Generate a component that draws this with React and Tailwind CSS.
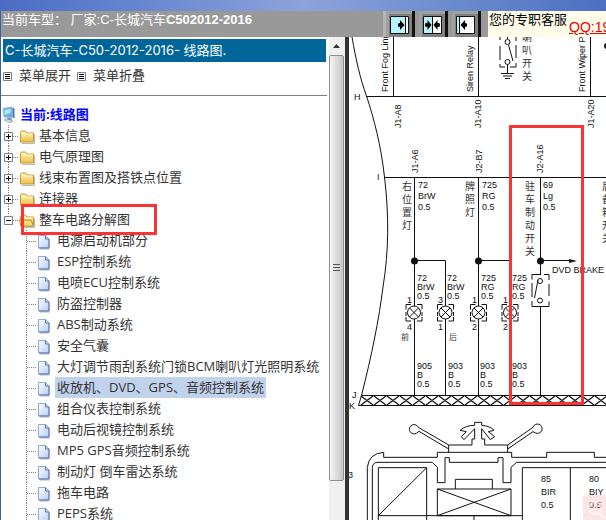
import React from "react";

const FOLDERS = ["基本信息", "电气原理图", "线束布置图及搭铁点位置", "连接器"];

const PAGES = [
  "电源启动机部分",
  "ESP控制系统",
  "电喷ECU控制系统",
  "防盗控制器",
  "ABS制动系统",
  "安全气囊",
  "大灯调节雨刮系统门锁BCM喇叭灯光照明系统",
  "收放机、DVD、GPS、音频控制系统",
  "组合仪表控制系统",
  "电动后视镜控制系统",
  "MP5 GPS音频控制系统",
  "制动灯 倒车雷达系统",
  "拖车电路",
  "PEPS系统",
];

const SELECTED = "收放机、DVD、GPS、音频控制系统";

function FolderIcon({ open }) {
  return (
    <svg width="18" height="18" viewBox="0 0 18 18" className="shrink-0">
      <defs>
        <linearGradient id="folder" x1="0" y1="0" x2="0" y2="1">
          <stop offset="0" stopColor="#fff6b8" />
          <stop offset="1" stopColor="#ecc04a" />
        </linearGradient>
      </defs>
      <path d="M3 16.500h12.500v-9" fill="none" stroke="#b9b9b9" />
      <path d="M1.500 15v-9.500l1-1.500h4l1.500 2h6.500v9z" fill="url(#folder)" stroke="#c39a2c" />
      {open && <path d="M2 15l-1.500-6h11.500l2.500 6z" fill="#f9dc72" stroke="#b88d22" />}
      <path d="M2.500 7h11" stroke="#fffbe0" />
    </svg>
  );
}

function PageIcon() {
  return (
    <svg width="18" height="18" viewBox="0 0 18 18" className="shrink-0">
      <defs>
        <linearGradient id="page" x1="0" y1="0" x2="1" y2="1">
          <stop offset="0" stopColor="#ffffff" />
          <stop offset="1" stopColor="#b4cdf4" />
        </linearGradient>
      </defs>
      <path d="M3 17h9.500" stroke="#b5b5b5" />
      <path d="M1.500 3.500h7l3.500 3.500v9h-10.500z" fill="url(#page)" stroke="#8fa9d6" />
      <path d="M8.500 3.500v3.500h3.500v9h-10" fill="none" stroke="#5c74ac" />
    </svg>
  );
}

function ComputerIcon() {
  return (
    <svg width="18" height="18" viewBox="0 0 18 18" className="shrink-0">
      <path d="M2 2.500l9-1.500v10.500l-8-0.500z" fill="#5cb4ee" stroke="#9cb8cf" />
      <path d="M3.500 4l6-1v4l-6 2z" fill="#b5e4fd" />
      <path d="M11.500 1.500l2 1v10l-2-1z" fill="#4a74b4" />
      <path d="M6 12l5 .5-1 2.500-3-1z" fill="#557dbd" />
      <path d="M3 14l3-1 6 2-3 2z" fill="#d5dae2" stroke="#8f99a8" strokeWidth=".7" />
    </svg>
  );
}

function MenuIcon() {
  return (
    <svg width="9" height="9" viewBox="0 0 9 9">
      <path d="M.5.5h8v8h-8z" fill="#fff" stroke="#808080" />
      <path d="M2 2.500h5M2 4.500h5M2 6.500h5" stroke="#000" />
    </svg>
  );
}

function Joint({ open }) {
  return (
    <svg width="18" height="21" viewBox="0 0 18 21">
      <path d={open ? "M7.500 0v6" : "M7.500 0v21"} stroke="#808080" strokeDasharray="1 1" />
      <path d="M12 11.500h5" stroke="#808080" strokeDasharray="1 1" />
      <path d="M3.500 7.500h8v8h-8z" fill="#fff" stroke="#808080" />
      <path d={open ? "M5 11.500h5" : "M5 11.500h5M7.500 9v5"} stroke="#000" />
    </svg>
  );
}

function FolderRow({ label, open }) {
  return (
    <li className="relative">
      <div className="flex h-[21px] items-center">
        <button type="button" aria-label={label} aria-expanded={!!open}>
          <Joint open={open} />
        </button>
        <FolderIcon open={open} />
        <a href="#folder" className="px-0.5 leading-[21px]">{label}</a>
      </div>
      {open && <div className="pointer-events-none absolute -top-[5px] left-5 z-10 h-[31px] w-[136px] border-3 border-[#fa3434]" />}
    </li>
  );
}

function PageRow({ label }) {
  return (
    <li className="flex h-[21px] items-center pl-[18px]">
      <svg width="18" height="21" viewBox="0 0 18 21" className="shrink-0">
        <path d="M7.500 0v21M8 11.500h10" stroke="#808080" strokeDasharray="1 1" />
      </svg>
      <PageIcon />
      <a href="#page" className={label === SELECTED ? "bg-[#c0d2ec] px-0.5 leading-[21px]" : "px-0.5 leading-[21px]"}>{label}</a>
    </li>
  );
}

function Sidebar() {
  return (
    <nav className="min-h-0 w-[328px] shrink-0 overflow-hidden whitespace-nowrap bg-white pt-0.5 font-['Open_Sans','Noto_Sans_CJK_SC',sans-serif] text-[13px] text-[#333]">
      <h1 className="ml-0.5 mr-[3px] h-[23px] bg-[#006699] pl-0.5 font-['Inter','Noto_Sans_CJK_SC',sans-serif] leading-[23px] text-white">
        C-长城汽车-C50-2012-2016- 线路图.
      </h1>
      <div className="mb-[5px] flex h-7 items-center gap-1.5 pl-0.5">
        <button type="button" className="flex items-center gap-[7px]"><MenuIcon />菜单展开</button>
        <button type="button" className="flex items-center gap-[7px]"><MenuIcon />菜单折叠</button>
      </div>
      <hr className="mr-0.5 border-[#808080]" />
      <div className="mt-2 flex h-[21px] items-center">
        <ComputerIcon />
        <a href="#root" className="px-px font-bold text-[#0000ff]">当前:线路图</a>
      </div>
      <ul>
        {FOLDERS.map(f => <FolderRow key={f} label={f} />)}
        <FolderRow label="整车电路分解图" open />
        {PAGES.map(p => <PageRow key={p} label={p} />)}
      </ul>
    </nav>
  );
}

function ScrollBar() {
  return (
    <div className="flex w-4 shrink-0 flex-col bg-[#f0f0f0] pr-px">
      <div className="flex h-[18px] shrink-0 items-center justify-center">
        <svg width="7" height="4" viewBox="0 0 7 4"><path d="M0 4l3.500-4 3.500 4z" fill="#333" /></svg>
      </div>
      <div className="flex h-[92%] flex-col items-center justify-center rounded-xs border border-[#8e8e8e] bg-linear-to-r from-[#f6f6f6] via-[#dcdcdc] to-[#c4c4c8]">
        <svg width="7" height="8" viewBox="0 0 7 8"><path d="M0 .5h7M0 3.500h7M0 6.500h7" stroke="#555" /></svg>
      </div>
      <div className="min-h-[39px] grow" />
    </div>
  );
}

function FrameButton({ label, children }) {
  return (
    <button type="button" aria-label={label} className="flex h-full w-[29px] items-center justify-center border-r-3 border-[#111] bg-[#808080] pt-px shadow-[inset_3px_3px_0_#a0a0a0]">
      <svg width="19" height="18" viewBox="0 0 19 18">
        <path d="M.5.5h18v17h-18z" fill="#fff" stroke="#111" />
        {children}
      </svg>
    </button>
  );
}

function TopBar() {
  return (
    <header className="flex h-[26px] shrink-0 overflow-hidden whitespace-nowrap bg-[#999] font-['Liberation_Sans','Noto_Sans_CJK_SC',sans-serif] text-[13px]">
      <p className="w-[382px] shrink-0 pl-px leading-[18px] text-white">
        当前车型： 厂家:C-长城汽车<b>C502012-2016</b>
      </p>
      <div className="flex w-[105px] shrink-0 gap-1 border-l-3 border-[#b4b4b4]">
        <FrameButton label="展开左栏">
          <path d="M1 1h14v16h-14z" fill="#b8f2fc" />
          <path d="M15.500 1v16" stroke="#111" />
          <path d="M8 8l1-1h1v-3l4.500 5-4.500 5v-3h-1l-1-1z" fill="#000" />
        </FrameButton>
        <FrameButton label="均分">
          <path d="M1 1h8v16h-8z" fill="#b8f2fc" />
          <path d="M9.500 1v16" stroke="#111" />
          <path d="M2 8l1-1h1.500v-3l4 5-4 5v-3h-1.500l-1-1zM17 8l-1-1h-1.500v-3l-4 5 4 5v-3h1.500l1-1z" fill="#000" />
        </FrameButton>
        <FrameButton label="收起左栏">
          <path d="M1 1h2v16h-2z" fill="#b8f2fc" />
          <path d="M3.500 1v16" stroke="#111" />
          <path d="M11 8l-1-1h-1v-3l-4.500 5 4.500 5v-3h1l1-1z" fill="#000" />
        </FrameButton>
      </div>
      <div className="flex grow gap-0.5 bg-[#fffdea] pl-px text-black">
        <span className="leading-[18px]">您的专职客服</span>
        <a href="#qq" className="pt-2 text-sm leading-4 text-[#f00000] underline">QQ:19</a>
      </div>
    </header>
  );
}

function Lamp({ x }) {
  return (
    <g fill="none">
      <path d={`M${x - 3} 304.500h-5v5M${x - 8} 312v4M${x - 8} 317v4h5M${x + 3} 304.500h5v5M${x + 8} 312v4M${x + 8} 317v4h-5`} />
      <circle cx={x} cy="312.500" r="6.500" fill="#fff" />
      <path d={`M${x - 4.5} 308l9 9M${x + 4.5} 308l-9 9`} />
    </g>
  );
}

// stacked wire labels: number, colour, section
function Wire({ x, y, lines, step = 9 }) {
  return lines.map((t, i) => <text key={i} x={x} y={y + i * step}>{t}</text>);
}

function Upright({ x, y, children }) {
  return <text transform={`translate(${x} ${y}) rotate(-90)`}>{children}</text>;
}

function Column({ x, y, text }) {
  return (
    <g fill="#333" className="font-['Liberation_Serif','Noto_Sans_CJK_SC',serif] text-[10px]">
      {[...text].map((c, i) => <text key={i} x={x} y={y + i * 13}>{c}</text>)}
    </g>
  );
}

// ground bus hatching, one cross per cell
const MESH = Array.from({ length: 20 }, (_, i) => 361 + i * 13)
  .map(x => `M${x} 396l12 9M${x + 12} 396l-12 9`)
  .join("");

function Diagram() {
  return (
    <svg viewBox="349 37 257 483" preserveAspectRatio="xMinYMin slice" className="h-full w-full bg-white font-['Liberation_Sans',sans-serif] text-[9px]">
      <g stroke="#111" fill="none">
        <path d="M352 37C356 60 360 78 366.500 96C374 119 381 145 384.500 177C389 215 389 250 383 287C379 319 372 354 361.500 395.500L358.500 405.500" />
        <path d="M366 96.500h240M384 177.500h222M393.500 37v59M478.500 37v59M590.500 37v59" />
        <path d="M414.500 177v219M478.500 177v219M540.500 177v98M540.500 307v89M414 260.500h31.500v135M478 260.500h32v45" />
        <path d="M361.500 395.500h245M358.500 405.500h248" />
        <path d={MESH} strokeWidth="1.200" />
        <Lamp x={414} />
        <Lamp x={445.5} />
        <Lamp x={478.5} />
        <Lamp x={510} />
        <path d="M540 260.500h31" />
        {/* brake switch */}
        <path d="M540 274.500h-8v5M532 283v14M532 301v5.500h17v-5M549 296v-12M549 280v-5.500h-5" />
        <circle cx="540" cy="281" r="2.500" />
        <circle cx="540" cy="300.500" r="2.500" />
        <path d="M538 280l-3.500 18" />
        {/* horn switch */}
        <path d="M500 37v3M500 46v14M500 64v3h5M510 67h6v-4M516 58v-13M516 41v-4" />
        <path d="M507.500 37v2M507.500 65v8M501 73.500h13M503 76h9M505 78.500h5" />
        <circle cx="507.500" cy="42" r="2.500" />
        <circle cx="507.500" cy="62" r="2.500" />
        <path d="M508.500 45l4.500 16" />
      </g>
      <g fill="#111">
        <circle cx="414.500" cy="261" r="3.500" />
        <circle cx="478.500" cy="261" r="3.500" />
        <circle cx="540.500" cy="261" r="3.500" />
        <path d="M569 259l8 2-8 2z" />
        <circle cx="607" cy="46" r="3" />
      </g>

      <g fill="#111">
        <text x="354" y="100">H</text>
        <text x="377" y="180">I</text>
        <text x="352" y="398">J</text>
        <text x="349" y="409">K</text>
        <text x="348" y="478">3</text>
        <Upright x={388} y={92}>Front Fog Ling</Upright>
        <Upright x={473} y={92}>Siren Relay</Upright>
        <Upright x={585} y={92}>Front Wiper P</Upright>
        <Upright x={401} y={128}>J1-A8</Upright>
        <Upright x={481} y={128}>J1-A10</Upright>
        <Upright x={594} y={128}>J1-A20</Upright>
        <Upright x={418} y={173}>J1-A6</Upright>
        <Upright x={482} y={173}>J2-B7</Upright>
        <Upright x={543} y={173}>J2-A16</Upright>

        <Wire x={418} y={188} step={11} lines={["72", "BrW", "0.5"]} />
        <Wire x={482} y={188} step={11} lines={["725", "RG", "0.5"]} />
        <Wire x={543} y={188} step={11} lines={["69", "Lg", "0.5"]} />

        <Wire x={417} y={281} lines={["72", "BrW", "0.5"]} />
        <Wire x={447} y={281} lines={["72", "BrW", "0.5"]} />
        <Wire x={481} y={281} lines={["725", "RG", "0.5"]} />
        <Wire x={512} y={281} lines={["725", "RG", "0.5"]} />

        <Wire x={417} y={369} lines={["905", "B", "0.5"]} />
        <Wire x={448} y={369} lines={["903", "B", "0.5"]} />
        <Wire x={480} y={369} lines={["903", "B", "0.5"]} />
        <Wire x={512} y={369} lines={["903", "B", "0.5"]} />

        <Wire x={407} y={303} step={27} lines={["1", "4"]} />
        <Wire x={438} y={303} step={27} lines={["3", "1"]} />
        <Wire x={472} y={303} step={27} lines={["1", "2"]} />
        <Wire x={503} y={303} step={27} lines={["1", "2"]} />
        <text x="552" y="273">DVD BRAKE</text>

        <Wire x={541} y={482} step={13} lines={["85", "BIR", "0.5"]} />
        <Wire x={589} y={482} step={13} lines={["80", "BIY", "0.5"]} />
      </g>

      <Column x={522} y={41} text="喇叭开关" />
      <Column x={402} y={190} text="右位置灯" />
      <Column x={465} y={190} text="牌照灯" />
      <Column x={525} y={190} text="驻车制动开关" />
      <Column x={602} y={190} text="后备箱开关" />
      <g fill="#333" className="font-['Liberation_Serif','Noto_Sans_CJK_SC',serif] text-[8px]">
        <text x="401" y="340">前</text>
        <text x="449" y="340">后</text>
      </g>

      {/* fuse box housing */}
      <g transform="translate(345 390) scale(.33333)" fill="none" stroke="#111" strokeWidth="3">
        <path d="M311 165L220 112A14 14 0 1 0 214 130L222 124L311 177" />
        <path d="M488 165L564 112A14 14 0 1 1 572 129L564 125L488 177" />
        <path d="M311 187V165H381V147H389V116L357 149L349 140L364 125L345 121Q362 106 389 106V97H410V106Q436 108 447 121L430 125L449 140L436 149L410 116V147H419V165H488V187" />
        <path d="M67 390V232Q72 190 116 187V202H277V187H500V202H605V187H748V202H790" />
        <path d="M82 390V233Q83 217 98 217H262L277 232V278H300V203H313V217H459V203H474V278H498V232L515 217H790" />
        <path d="M100 390V233H245V390M100 377L245 233M100 377H532M387 377V390" />
        <path d="M331 297V268H442V297M277 297H498V377H277zM277 297L498 377M498 297L277 377" />
        <path d="M532 390V233H790M676 233V390" />
      </g>

      <rect x="583" y="495" width="40" height="40" rx="4" fill="#f4a0a0" fillOpacity=".28" />
      <g stroke="#fff" strokeWidth="2" strokeOpacity=".6" fill="none">
        <circle cx="595" cy="508" r="6" />
        <path d="M599 513l5 5" />
      </g>
      <rect x="510.500" y="126.500" width="72" height="277" fill="none" stroke="#fa3434" strokeWidth="3" />
    </svg>
  );
}

export default function App() {
  return (
    <div className="flex h-screen flex-col overflow-hidden bg-white">
      <div className="h-[11px] shrink-0 bg-linear-to-r from-[#4a6cc4] via-[#8ca4dc] to-[#4c70c0]" />
      <div className="flex min-h-0 grow flex-col border-l border-[#3c5cac]">
        <TopBar />
        <div className="flex min-h-0 grow">
          <Sidebar />
          <ScrollBar />
          <main className="min-w-0 grow overflow-hidden border-l-4 border-[#333]">
            <Diagram />
          </main>
        </div>
      </div>
    </div>
  );
}
